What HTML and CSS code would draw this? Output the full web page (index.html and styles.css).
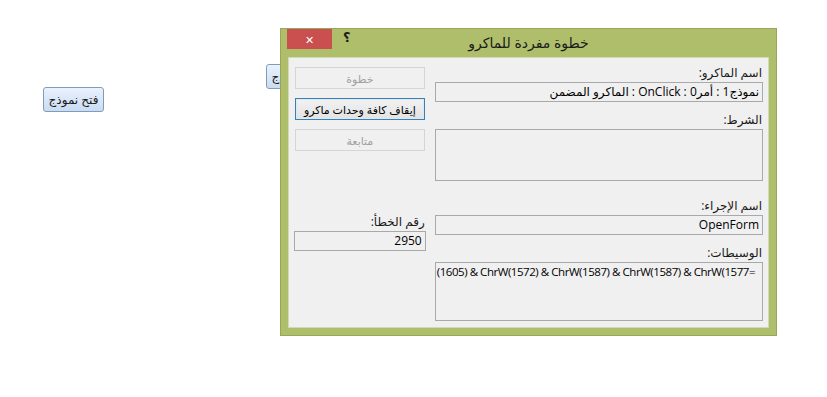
FILE: index.html
```html
<!DOCTYPE html>
<html lang="ar">
<head>
    <meta charset="UTF-8">
    <meta name="viewport" content="width=device-width, initial-scale=1.0">
    <title>خطوة مفردة للماكرو</title>
    <link rel="stylesheet" href="styles.css">
</head>
<body>
    <div class="form-canvas" dir="rtl">
        <button class="form-btn open-btn">فتح نموذج</button>
        <button class="form-btn back-btn">فتح نموذج</button>

        <div class="dialog">
            <div class="title-bar">
                <div class="controls">
                    <span class="close-btn">&#x2715;</span>
                    <span class="help-btn">؟</span>
                </div>
                <div class="title">خطوة مفردة للماكرو</div>
                <div></div>
            </div>
            <div class="client">
                <!-- right column: macro details -->
                <div class="details">
                    <div class="label">اسم الماكرو:</div>
                    <div class="field">نموذج1 : أمر0 : OnClick : الماكرو المضمن</div>

                    <div class="label gap">الشرط:</div>
                    <div class="field area cond"></div>

                    <div class="label gap-lg">اسم الإجراء:</div>
                    <div class="field">OpenForm</div>

                    <div class="label gap">الوسيطات:</div>
                    <div class="field area args"><span class="ltr">(1605) &amp; ChrW(1572) &amp; ChrW(1587) &amp; ChrW(1587) &amp; ChrW(1577=</span></div>
                </div>
                <!-- left column: buttons and error number -->
                <div class="actions">
                    <button class="dlg-btn" disabled>خطوة</button>
                    <button class="dlg-btn focused">إيقاف كافة وحدات ماكرو</button>
                    <button class="dlg-btn" disabled>متابعة</button>
                    <div class="label err-label">رقم الخطأ:</div>
                    <div class="field">2950</div>
                </div>
            </div>
        </div>
    </div>
</body>
</html>
```

FILE: styles.css
```css
body { margin: 0; background: #fff; font-family: "Open Sans", "DejaVu Sans", sans-serif; font-size: 12px; color: #000; }
.form-canvas { position: relative; width: 827px; height: 397px; overflow: hidden; }

.form-btn { position: absolute; width: 61px; height: 25px; padding: 0; font: inherit; font-size: 12px; color: #1a1a1a; border: 1px solid #7f9db9; border-radius: 3px; background: linear-gradient(#eaf2fc, #c9dcf3); }
.open-btn { left: 43px; top: 87px; }
.back-btn { left: 266px; top: 64px; }

.dialog { position: absolute; left: 280px; top: 28px; width: 497px; height: 308px; box-sizing: border-box; background: #afbe6b; border: 1px solid #97a659; padding: 0 7px 7px; display: flex; flex-direction: column; }
.title-bar { height: 28px; display: grid; grid-template-columns: 1fr auto 1fr; direction: ltr; align-items: start; }
.controls { display: flex; align-items: center; gap: 13px; }
.close-btn { width: 45px; height: 20px; margin-left: -1px; background: #c9504f; color: #fff; font-size: 11px; font-weight: bold; display: flex; align-items: center; justify-content: center; }
.help-btn { font-size: 13px; font-weight: bold; color: #1c1c1c; margin-top: -4px; margin-left: -2px; }
.title { font-size: 14px; line-height: 30px; color: #1a1a1a; margin-top: -1px; }

.client { flex: 1; background: #f0f0f0; border: 1px solid #d3d9b6; padding: 7px 5px 0; display: flex; gap: 9px; }
.details { width: 329px; display: flex; flex-direction: column; }
.actions { width: 132px; display: flex; flex-direction: column; }

.label { line-height: 15px; height: 15px; padding-right: 1px; margin-bottom: 2px; color: #1a1a1a; }
.gap { margin-top: 10px; }
.gap-lg { margin-top: 17px; }
.field { height: 20px; box-sizing: border-box; border: 1px solid #a9a9a9; background: #f0f0f0; padding: 0 3px; line-height: 18px; white-space: nowrap; overflow: hidden; }
.cond { height: 52px; }
.args { height: 59px; padding: 0 1px; }
.ltr { direction: ltr; unicode-bidi: isolate; display: block; text-align: left; font-size: 11.5px; letter-spacing: -0.45px; }

.dlg-btn { height: 22px; margin: 2px 1px 7px; font: inherit; font-size: 11px; color: #a0a0a0; background: #f0f0f0; border: 1px solid #d5d5d5; padding: 0; }
.dlg-btn.focused { color: #000; border-color: #3c7fb1; background: linear-gradient(#f2f2f2, #e3e3e3); box-shadow: inset 0 0 0 1px #dbe9f7; }
.err-label { margin-top: 56px; }
```
